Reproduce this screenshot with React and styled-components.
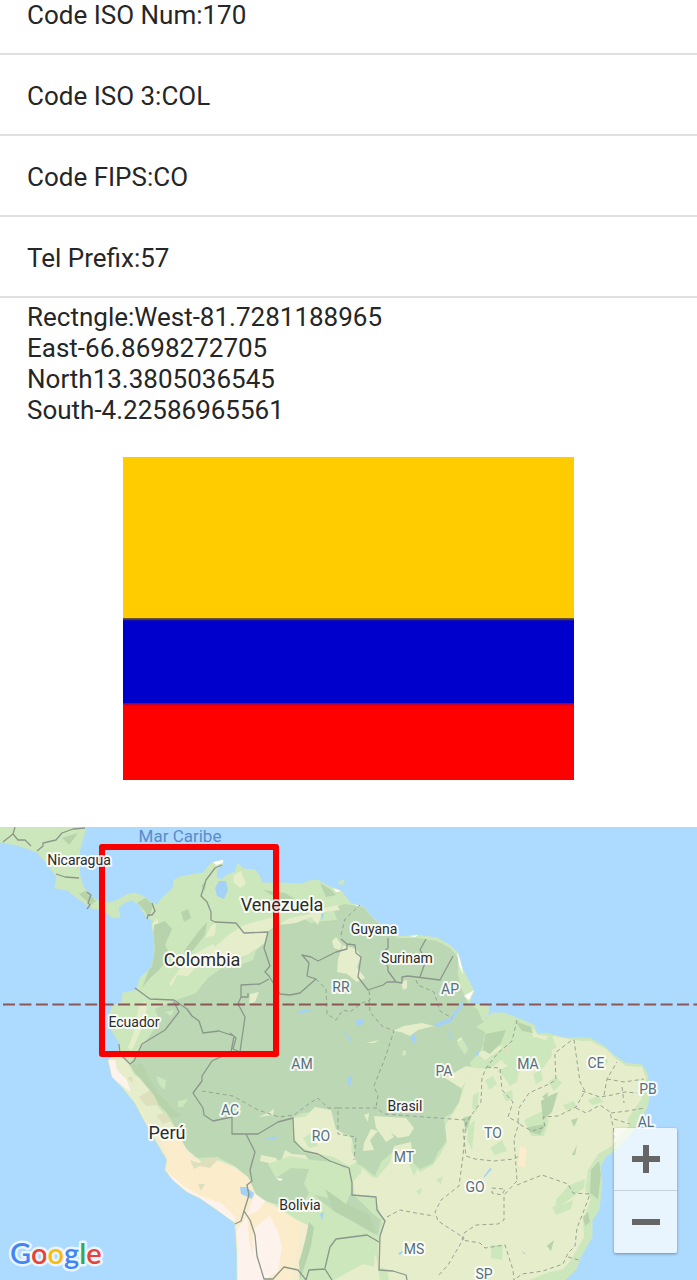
import React from 'react';
import styled, { createGlobalStyle, css } from 'styled-components';

const GlobalStyle = createGlobalStyle`
  * { box-sizing: border-box; }
  html, body { margin: 0; padding: 0; background: #fff; }
  body {
    font-family: Roboto, 'Liberation Sans', sans-serif;
    color: #262626;
    overflow-x: hidden;
  }
`;

const Page = styled.main`
  display: flex;
  flex-direction: column;
  overflow: hidden;
`;

const InfoList = styled.ul`
  list-style: none;
  margin: -26px 0 0;
  padding: 0;
`;

const InfoRow = styled.li`
  display: flex;
  align-items: center;
  height: 81px;
  padding: 4px 27px 0;
  border-bottom: 2px solid #e0e0e0;
  font-size: 26px;
  line-height: 31px;
`;

const Bounds = styled.p`
  display: flex;
  flex-direction: column;
  margin: 0;
  padding: 4px 27px 0;
  font-size: 26px;
  line-height: 31px;
`;

const FlagFrame = styled.div`
  padding: 31px 123px 47px;
`;

const Flag = styled.div`
  aspect-ratio: 451 / 323;
  display: grid;
  grid-template-rows: 161fr 85fr 77fr;
`;

const stripeColors = { yellow: '#ffcc00', blue: '#0000cc', red: '#ff0000' };

const Stripe = styled.div`
  background: ${(p) => stripeColors[p.$color]};
  ${(p) => p.$from && css`
    background: linear-gradient(${p.$from}, ${stripeColors[p.$color]} 3px);
  `}
`;

const MapPanel = styled.section`
  position: relative;
  background: #addaff;
`;

const MapDrawing = styled.svg`
  display: block;
  width: 100%;
  height: auto;
`;

const MapText = styled.text`
  font-family: Roboto, 'Liberation Sans', sans-serif;
  text-anchor: middle;
  paint-order: stroke;
  stroke-linejoin: round;
  stroke: rgba(255, 255, 255, 0.85);
  stroke-width: 4px;
  font-size: 14px;
  fill: #2b2b2b;
  ${(p) => p.$kind === 'big' && css`font-size: 18px;`}
  ${(p) => p.$kind === 'state' && css`fill: #56707c;`}
  ${(p) => p.$kind === 'sea' && css`
    font-size: 17px;
    fill: #5b8cc9;
    stroke: none;
  `}
`;

const LogoText = styled.text`
  font-family: Lato, 'Open Sans', sans-serif;
  font-size: 29px;
  font-weight: 600;
  paint-order: stroke;
  stroke: rgba(255, 255, 255, 0.75);
  stroke-width: 5px;
  stroke-linejoin: round;
`;

const ZoomControl = styled.div`
  position: absolute;
  right: 20px;
  bottom: 27px;
  width: 63px;
  display: flex;
  flex-direction: column;
  border-radius: 2px;
  background: rgba(255, 255, 255, 0.72);
  box-shadow: 0 1px 3px rgba(0, 0, 0, 0.35);
`;

const ZoomButton = styled.button`
  display: flex;
  align-items: center;
  justify-content: center;
  height: 62px;
  padding: 0;
  border: 0;
  background: none;
  color: #666;
  cursor: pointer;
  & + & {
    height: 63px;
    border-top: 1px solid #c3d3e0;
  }
`;

const info = ['Code ISO Num:170', 'Code ISO 3:COL', 'Code FIPS:CO', 'Tel Prefix:57'];

const bounds = [
  'Rectngle:West-81.7281188965',
  'East-66.8698272705',
  'North13.3805036545',
  'South-4.22586965561',
];

const land =
  'M0 827H86L84 835 80 848 79 860 80 877 84 888 92 897 100 902 110 903 118 900 126 895 134 893 143 896 150 902 157 905 162 898 173 888 174 880 180 877 190 875 203 873 208 867 213 862 223 860 223 864 217 869 216 877 221 880 227 875 235 872 238 863 243 869 255 870 259 875 262 883 280 883 302 884 309 881 317 880 330 887 340 890 346 897 350 903 363 907 373 918 387 930 397 937 417 935 437 938 450 945 458 953 462 967 466 976 472 987 474 992 469 1003 489 1007 488 1014 482 1021 492 1013 504 1013 517 1018 534 1025 537 1034 545 1033 565 1038 590 1038 605 1047 615 1056 625 1063 642 1065 647 1073 650 1093 647 1107 637 1127 615 1150 605 1157 600 1167 602 1183 599 1210 592 1220 592 1237 579 1260 577 1268 565 1280H237L237 1253 235 1223 220 1212 200 1198 187 1192 173 1180 165 1170 167 1160 157 1143 145 1122 135 1103 123 1088 112 1077 108 1060 118 1052 120 1043 113 1033 108 1020 112 1007 122 1002 123 993 137 990 140 978 152 967 155 947 153 933 152 920 147 917 143 912 140 905 132 900 125 902 118 908 120 917 113 918 103 910 92 908 80 900 67 890 55 888 57 878 50 867 37 852 17 845 0 842Z';

const forest =
  'M208 978L222 968 238 955 252 950 265 943 267 930 282 923 290 920 302 917 310 923 325 921 337 920 333 908 345 904 363 907 373 918 387 930 397 938 417 938 437 941 450 948 458 957 458 975 462 990 468 1003 478 1010 482 1020 492 1027 485 1040 480 1052 470 1062 473 1075 458 1083 462 1090 459 1102 452 1113 443 1118 446 1128 446 1142 438 1152 433 1163 420 1169 412 1162 400 1150 390 1154 381 1162 375 1176 362 1166 353 1162 355 1150 351 1136 336 1130 328 1112 313 1112 302 1113 292 1118 293 1140 302 1152 320 1156 345 1167 351 1184 352 1193 372 1213 381 1220 378 1235 372 1233 350 1220 335 1212 310 1192 300 1207 287 1206 267 1202 254 1192 250 1180 235 1166 217 1157 197 1158 185 1147 179 1133 173 1123 166 1112 157 1100 154 1090 147 1083 135 1074 130 1065 133 1058 143 1045 150 1035 160 1022 155 1009 173 1001 185 997 196 993 202 985Z';

const cerrado =
  'M466 1081L476 1068 490 1069 501 1060 515 1073 529 1068 543 1060 552 1050 566 1041 590 1041 606 1049 615 1058 626 1066 642 1067 646 1078 641 1102 630 1124 612 1146 598 1154 588 1170 585 1190 591 1199 583 1220 584 1237 571 1260 554 1280H389L387 1270 378 1266 378 1245 384 1222 378 1207 375 1198 355 1196 353 1182 360 1174 377 1178 388 1165 398 1155 412 1164 420 1172 433 1165 440 1155 447 1142 445 1126 452 1115 459 1103 463 1090Z';

const andes =
  'M109 1057L118 1052 128 1063 134 1075 147 1083 152 1100 162 1112 172 1124 178 1135 188 1151 202 1162 218 1160 235 1167 248 1177 257 1197 273 1204 297 1220 310 1226 303 1247 299 1280H237L237 1253 235 1223 220 1212 200 1198 187 1192 173 1180 165 1170 167 1160 157 1143 145 1122 135 1103 123 1088 112 1077Z';

const patches = [
  {
    name: 'pale',
    fill: '#e6edcb',
    shapes: [
      'M211 950L230 934 244 925 258 921 274 917 279 924 268 931 264 943 254 952 240 958 226 965 211 963Z',
      'M109 1057L118 1052 128 1063 134 1075 147 1083 152 1100 162 1112 172 1126 160 1140 145 1118 135 1103 123 1088 112 1077Z',
      'M278 925L290 918 306 915 322 909 337 905 340 910 322 912 318 925 311 917 296 923Z',
      'M343 945L356 949 361 956 357 967 365 978 357 982 347 974 337 972 338 959Z',
      'M332 941L336 937 342 945 340 950 334 948Z',
      'M401 982L407 980 407 988 403 990Z',
      'M393 1031L404 1026 422 1023 434 1026 418 1030 410 1036 401 1032Z',
      'M366 1043L379 1040 374 1043Z',
      'M250 994L259 992 255 1002 249 1004Z',
      'M280 1165L276 1158 261 1155 260 1161 269 1163 274 1173 293 1164 311 1163 305 1155 292 1154 285 1150Z',
      'M258 1117L268 1113 274 1109 273 1115Z',
      'M294 1118L305 1117 315 1107 331 1110 336 1129 352 1139 351 1151 357 1162 349 1166 334 1157 314 1153 300 1146 294 1138Z',
      'M364 1115L369 1113 368 1122Z',
      'M374 1116L406 1118 414 1128 409 1136 398 1138 389 1131 382 1136 376 1128Z',
      'M380 1133L389 1130 394 1137 386 1142Z',
      'M364 1143L371 1129 378 1131 370 1140 374 1150 363 1151Z',
      'M394 1146L411 1142 413 1161 402 1170 389 1166Z',
      'M334 1245L350 1239 367 1243 376 1256 380 1280H330L327 1258Z',
      'M186 960L200 951 213 944 216 949 198 965 176 989 169 984Z',
      'M133 1035L139 1006 145 1001 147 1008 142 1028 132 1050 128 1048Z',
      'M234 875L241 871 246 884 240 888 233 882Z',
      'M445 1078L466 1066 476 1068 461 1088Z',
      'M476 1053L486 1050 498 1040 501 1034 508 1034 501 1049 485 1060Z',
      'M531 1026L538 1035 548 1036 541 1050 534 1042Z',
      'M552 1036L586 1042 588 1051 566 1055 557 1048Z',
      'M205 938L211 926 216 923 215 935Z',
      'M150 927L157 918 159 924 155 931Z',
      'M362 1168L371 1176 377 1184 368 1188 360 1178Z',
      'M457 1040L461 1037 465 1044 460 1046Z',
      'M402 1053L405 1050 406 1055Z',
    ],
  },
  {
    name: 'meadow',
    fill: '#cde7bc',
    shapes: [
      'M177 975L187 976 197 978 193 988 184 997 179 989 168 994Z',
      'M222 969L244 957 257 948 253 960 235 967Z',
      'M156 1076L166 1080 165 1090 160 1086Z',
      'M178 1101L188 1099 183 1107 178 1107Z',
      'M165 1012L174 1010 171 1016Z',
      'M268 1164L290 1156 312 1160 332 1162 348 1170 352 1190 345 1206 334 1199 310 1194 304 1184 309 1169 291 1168 276 1178Z',
      'M306 1203L328 1212 355 1225 376 1236 374 1267 363 1264 332 1281H300L305 1245 312 1228Z',
      'M457 1043L462 1039 468 1049 465 1055Z',
      'M476 1027L496 1014 516 1020 533 1027 531 1034 518 1041 508 1043 496 1048 483 1041 485 1032Z',
      'M519 1042L536 1037 551 1042 552 1056 542 1069 528 1061 515 1062Z',
      'M497 1071L510 1065 520 1067 517 1082 510 1086 504 1077Z',
      'M524 1120L543 1111 549 1121 544 1136 531 1136Z',
      'M490 1148L502 1140 507 1151 495 1155Z',
      'M556 1200L568 1186 585 1179 584 1188 570 1199 555 1210Z',
      'M491 1245L503 1245 502 1260 491 1258Z',
      'M529 1280L550 1272 565 1269 571 1280Z',
      'M546 1246L553 1241 550 1249Z',
      'M627 1120L640 1101 648 1091 644 1116 634 1128Z',
      'M548 1082L556 1077 562 1083 554 1091Z',
      'M407 1160L411 1158 417 1170 414 1176Z',
      'M401 1055L406 1051 405 1056Z',
      'M303 1138L311 1133 318 1146 309 1148Z',
      'M485 1080L493 1076 497 1084 489 1090Z',
      'M502 1094L512 1090 513 1100 506 1101Z',
      'M533 1074L541 1070 543 1080 536 1084Z',
      'M552 1207L564 1204 573 1200 571 1209 556 1215Z',
      'M473 1095L479 1092 477 1112 472 1108Z',
      'M468 1126L475 1120 472 1150 467 1140Z',
      'M600 1056L608 1060 605 1068 598 1063Z',
      'M588 1100L598 1096 604 1102 592 1105Z',
      'M436 1180L443 1176 441 1184Z',
      'M416 1191L422 1188 420 1195Z',
      'M563 1105L574 1101 577 1107 566 1110Z',
    ],
  },
  {
    name: 'dense',
    fill: '#b6d3ac',
    shapes: [
      'M154 925L165 921 172 929 165 945 171 956 159 970 150 978 142 988 151 965Z',
      'M181 912L188 909 191 918 184 922Z',
      'M201 886L206 881 205 891Z',
      'M198 932L207 922 205 935 190 954 184 951Z',
      'M137 903L147 897 153 906 149 918 144 910Z',
      'M79 894L87 890 96 901 91 905Z',
      'M62 838L78 833 69 845Z',
      'M263 890L285 893 295 899 280 900Z',
      'M320 883L330 889 336 895 326 897Z',
      'M130 1065L142 1064 150 1079 157 1092 164 1099 174 1110 182 1116 172 1118 159 1105 153 1094 142 1081Z',
      'M541 1101L549 1096 558 1092 552 1112 543 1120Z',
      'M591 1170L599 1161 601 1174 598 1199 590 1193Z',
      'M571 1120L578 1118 574 1127Z',
      'M485 1034L506 1030 501 1043 490 1054 483 1050Z',
      'M515 1021L531 1027 533 1033 522 1031Z',
      'M528 1127L546 1124 540 1135 530 1132Z',
      'M309 1222L314 1227 311 1246 305 1265 300 1279 299 1262 304 1246Z',
      'M325 1189L346 1204 369 1214 376 1234 355 1222 334 1211Z',
      'M463 1118L472 1115 466 1132Z',
      'M572 1155L577 1145 575 1155Z',
      'M547 1246L554 1240 551 1251Z',
      'M542 1097L548 1092 547 1100Z',
      'M583 1217L588 1212 590 1222 585 1226Z',
    ],
  },
  {
    name: 'sand',
    fill: '#fbeccb',
    shapes: [
      'M169 1136L178 1140 190 1157 205 1165 218 1162 235 1168 248 1178 258 1200 276 1208 301 1223 298 1245 292 1280H237L237 1253 235 1223 220 1212 200 1198 187 1192 173 1180 165 1170 169 1158 160 1140Z',
      'M520 1146L527 1149 525 1167 518 1166Z',
    ],
  },
  {
    name: 'highland',
    fill: '#fdf3ec',
    shapes: [
      'M253 1229L270 1216 278 1232 282 1247 278 1271 265 1280 252 1280Z',
      'M237 1230L247 1216 249 1239 257 1280H238Z',
      'M167 1172L185 1187 203 1197 221 1203 235 1217 235 1222 214 1210 188 1192 173 1182Z',
      'M108 1060L115 1060 117 1070 127 1080 131 1093 122 1085 112 1077Z',
      'M255 1194L265 1201 258 1211 247 1215Z',
    ],
  },
  {
    name: 'ridge',
    fill: '#dddfbd',
    shapes: [
      'M139 1097L150 1090 159 1105 146 1106Z',
      'M190 1160L199 1163 208 1158 220 1157 210 1168 200 1166 194 1169Z',
      'M156 1115L166 1113 171 1121 163 1124Z',
      'M198 1184L205 1184 201 1191Z',
      'M127 1078L132 1076 133 1083Z',
      'M503 1054L511 1043 508 1054Z',
    ],
  },
  {
    name: 'surf',
    fill: '#ffffff',
    shapes: [
      'M213 862L223 859 223 863 216 865Z',
      'M333 888L341 891 336 892Z',
      'M350 901L363 905 357 906Z',
      'M409 936L418 935 415 937Z',
      'M457 953L461 959 463 975 459 965Z',
      'M464 996L474 990 469 1000Z',
      'M276 1178L283 1179 280 1181Z',
    ],
  },
  {
    name: 'lakes',
    fill: '#a4d2f7',
    shapes: [
      'M219 881L226 881 228 890 224 899 217 896 215 888Z',
      'M321 914L324 913 322 921Z',
      'M355 1021L362 1018 364 1023 359 1027Z',
      'M341 1029L352 1040 350 1041Z',
      'M434 1024L450 1018 459 1006 465 998 462 1007 451 1022 437 1027Z',
      'M447 1028L453 1039 450 1038Z',
      'M348 1077L352 1076 350 1087 347 1083Z',
      'M264 1139L278 1136 274 1140Z',
      'M240 1187L246 1187 254 1193 252 1199 241 1194Z',
      'M320 1214L324 1212 322 1221Z',
      'M484 1176L490 1168 492 1169 484 1178Z',
      'M521 1250L526 1254 524 1254Z',
      'M475 1053L480 1051 478 1056Z',
      'M410 1038L415 1033 415 1044Z',
      'M295 1054L298 1058 296 1061Z',
      'M296 1011L315 1009 300 1014Z',
      'M398 1253L405 1250 400 1255Z',
    ],
  },
];

const borders = [
  'M15 827L13 834 3 842M13 834L18 840 25 840 31 846M37 851L43 846 43 843 56 840 62 833 73 829 85 828',
  'M56 874L65 877 79 878M87 892L91 895 88 903 90 905 87 909',
  'M152 903L155 911 152 915 148 915 147 919',
  'M222 865L215 868 206 880 201 896 207 902 211 912 211 920 215 922 236 923 244 933 268 932 264 948 270 966 265 972 269 976 280 994 290 995 300 993 316 979 307 976 309 963 302 955 311 957 318 961 336 952 347 949 347 944 341 939',
  'M347 944L355 945 356 953 361 957 358 977 368 990 383 985 387 982 396 982 388 971 388 967 380 954 388 948 388 938',
  'M396 982L402 983 402 977 408 976 440 980 453 956M420 977L426 960 420 950 426 939',
  'M269 979L260 984 241 985 241 997 248 997 248 993M241 997L238 1004 245 1017 240 1052 233 1049 236 1038 230 1033',
  'M135 988L150 999 174 1000 187 1009 192 1016 199 1021 203 1033 219 1031 234 1036 231 1052 212 1061 202 1076 202 1081 193 1093 203 1108 204 1115 213 1121 232 1117 232 1134 258 1134 278 1122 293 1118 294 1141 304 1151 318 1154 330 1161 349 1168 352 1183 352 1195 376 1197 377 1210 385 1221 380 1236 379 1270 393 1271 406 1275 407 1280',
  'M174 1002L179 1012 165 1030 142 1044 134 1061 130 1064 120 1054 119 1044',
  'M246 1134L255 1152 250 1170 252 1181 247 1185 249 1195 244 1211 250 1220 255 1235 257 1256 264 1279 273 1279 284 1267 298 1270 306 1280 309 1270 325 1269 332 1280M325 1268L330 1247 336 1239 367 1235 379 1242M244 1211L241 1221 235 1224',
];

const stateBorders = [
  'M341 935L345 919 360 905',
  'M316 979L326 989 327 1014 336 1020 343 1010 350 1012 362 1003 370 1000 369 990',
  'M369 1000L370 1012 382 1026 394 1031 385 1058 374 1086 378 1096 376 1107M416 980L418 985 434 992 440 1011 452 1018',
  'M202 1091L233 1096 258 1110 279 1117 294 1115 310 1103 318 1098 328 1108 338 1108 338 1134 356 1137 354 1160',
  'M338 1108L377 1108 384 1114 465 1120',
  'M517 1020L512 1041 498 1053 486 1068 482 1078 481 1102 470 1117 463 1130 466 1156 475 1159 484 1160 494 1161 514 1159 519 1156',
  'M487 1067L500 1068 502 1090 513 1102 508 1117 519 1123 514 1139 517 1180',
  'M518 1122L519 1108 529 1093 549 1084 556 1080 555 1059 555 1053 572 1040 574 1040 580 1082 585 1091 576 1107 558 1116 543 1117 545 1127 532 1131 519 1124',
  'M582 1091L600 1097 612 1095 625 1092 637 1093M604 1095L607 1079 617 1062M607 1079L624 1082 644 1079M622 1087L624 1103',
  'M576 1108L586 1113 600 1105 610 1112 614 1131 615 1150M611 1113L627 1111 645 1108M614 1119L630 1124',
  'M517 1185L542 1175 568 1184 573 1193 590 1194 583 1213 577 1228 575 1246 568 1253 563 1264 543 1271 522 1274 514 1280M568 1257L579 1260',
  'M517 1181L504 1195 504 1220 498 1224 476 1225 464 1233 462 1240 480 1243 485 1248 505 1245 513 1270 514 1280',
  'M492 1188L505 1189 502 1195 492 1193Z',
  'M466 1122L463 1156 459 1186 441 1200 435 1212 438 1221 464 1238 448 1265 438 1276',
  'M387 1217L400 1210 416 1213 434 1216',
];

const labels = [
  { text: 'Mar Caribe', x: 180, y: 842, kind: 'sea' },
  { text: 'Nicaragua', x: 79, y: 865 },
  { text: 'Venezuela', x: 282, y: 911, kind: 'big' },
  { text: 'Colombia', x: 202, y: 966, kind: 'big' },
  { text: 'Guyana', x: 374, y: 934 },
  { text: 'Surinam', x: 407, y: 963 },
  { text: 'Ecuador', x: 134, y: 1027 },
  { text: 'Perú', x: 167, y: 1139, kind: 'big' },
  { text: 'Brasil', x: 405, y: 1111 },
  { text: 'Bolivia', x: 300, y: 1210 },
  { text: 'RR', x: 341, y: 992, kind: 'state' },
  { text: 'AP', x: 450, y: 994, kind: 'state' },
  { text: 'AM', x: 302, y: 1069, kind: 'state' },
  { text: 'PA', x: 444, y: 1076, kind: 'state' },
  { text: 'MA', x: 528, y: 1069, kind: 'state' },
  { text: 'CE', x: 596, y: 1068, kind: 'state' },
  { text: 'PB', x: 648, y: 1094, kind: 'state' },
  { text: 'AL', x: 646, y: 1127, kind: 'state' },
  { text: 'AC', x: 230, y: 1115, kind: 'state' },
  { text: 'RO', x: 321, y: 1141, kind: 'state' },
  { text: 'MT', x: 404, y: 1162, kind: 'state' },
  { text: 'TO', x: 493, y: 1138, kind: 'state' },
  { text: 'GO', x: 475, y: 1192, kind: 'state' },
  { text: 'MS', x: 414, y: 1254, kind: 'state' },
  { text: 'SP', x: 484, y: 1279, kind: 'state' },
];

const logo = [
  ['G', '#4285f4'],
  ['o', '#ea4335'],
  ['o', '#fbbc05'],
  ['g', '#4285f4'],
  ['l', '#34a853'],
  ['e', '#ea4335'],
];

function CountryMap() {
  return (
    <MapDrawing viewBox="0 827 697 453" role="img" aria-label="Colombia">
      <defs>
        <clipPath id="land-clip">
          <path d={land} />
        </clipPath>
      </defs>
      <path d={land} fill="#cde7bc" stroke="#cde7bc" strokeLinejoin="round" />
      <g clipPath="url(#land-clip)">
        <path d={forest} fill="#bcd7b4" />
        <path d={cerrado} fill="#e6edcb" />
        <path d={andes} fill="#f3ecce" />
        {patches.map((group) => (
          <g key={group.name} fill={group.fill}>
            {group.shapes.map((d) => <path key={d} d={d} />)}
          </g>
        ))}
      </g>
      <path d="M339 881L345 879 343 885 338 884Z" fill="#cde7bc" />
      <g fill="none" stroke="#8b978b" strokeLinejoin="round">
        <path d={borders.join('')} strokeWidth="1.3" />
        <path d={stateBorders.join('')} strokeDasharray="4 3" stroke="#98a394" />
      </g>
      <path d="M3 1004.5H697" stroke="#8d5656" strokeWidth="2" strokeDasharray="12 4.44" />
      <rect x="102" y="847" width="174" height="207" fill="none" stroke="#f80000" strokeWidth="6" strokeLinejoin="round" />
      {labels.map((l) => (
        <MapText key={l.text} x={l.x} y={l.y} $kind={l.kind}>{l.text}</MapText>
      ))}
      <LogoText x="10" y="1264">
        {logo.map(([letter, color], i) => <tspan key={i} fill={color}>{letter}</tspan>)}
      </LogoText>
    </MapDrawing>
  );
}

export default function App() {
  return (
    <Page>
      <GlobalStyle />
      <InfoList>
        {info.map((line) => <InfoRow key={line}>{line}</InfoRow>)}
      </InfoList>
      <Bounds>
        {bounds.map((line) => <span key={line}>{line}</span>)}
      </Bounds>
      <FlagFrame>
        <Flag role="img" aria-label="Flag of Colombia">
          <Stripe $color="yellow" />
          <Stripe $color="blue" $from="#80661a" />
          <Stripe $color="red" $from="#800066" />
        </Flag>
      </FlagFrame>
      <MapPanel>
        <CountryMap />
        <ZoomControl>
          <ZoomButton type="button" aria-label="Zoom in">
            <svg width="28" height="28" viewBox="0 0 28 28" fill="currentColor">
              <path d="M11 0h6v11h11v6H17v11h-6V17H0v-6h11z" />
            </svg>
          </ZoomButton>
          <ZoomButton type="button" aria-label="Zoom out">
            <svg width="28" height="28" viewBox="0 0 28 28" fill="currentColor">
              <path d="M0 11h28v6H0z" />
            </svg>
          </ZoomButton>
        </ZoomControl>
      </MapPanel>
    </Page>
  );
}
